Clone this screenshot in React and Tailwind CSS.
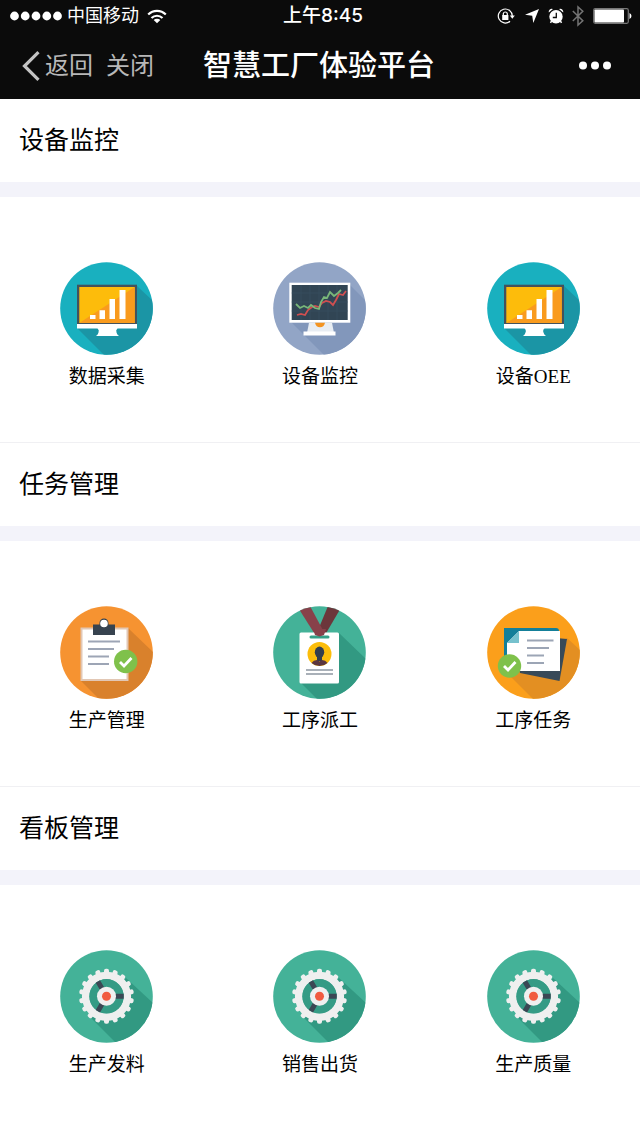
const TEETH = Array.from({ length: 18 }, (_, i) => i * 20)

function Round({ id, color, shade, shadow, children }) {
  return (
    <svg viewBox="0 0 93 93" className="h-[93px] w-[93px]" aria-hidden="true">
      <clipPath id={id}>
        <circle cx="46.5" cy="46.5" r="46.3" />
      </clipPath>
      <g clipPath={`url(#${id})`}>
        <rect width="93" height="93" fill={color} />
        <path d={shadow} fill={shade} />
        {children}
      </g>
    </svg>
  )
}

function MonitorIcon({ id }) {
  return (
    <Round id={id} color="#19b0bf" shade="#1b95a5" shadow="M17 66 44 93h49V39L76 23z">
      <rect x="17" y="22.7" width="60" height="40" fill="#43525c" />
      <path d="M19.3 25h55.4v36H19.3z" fill="#fdbc0b" />
      <path d="M19.3 61 74.7 25v36z" fill="#f99b1e" />
      <path d="M30 53h5.5v4H30zM39.5 48.3H45V57h-5.5zM49.5 37H55v20h-5.5zM59.5 28h6v29h-6z" fill="#fff" />
      <path d="M17 62h60v4.5H57.500q-2 1.500-1 4 .5 2 2.500 3.500H36q2-1.500 2.500-3.500 1-2.500-1-4H17z" fill="#fff" />
    </Round>
  )
}

function ChartIcon({ id }) {
  return (
    <Round id={id} color="#92a5c6" shade="#8297bb" shadow="M17 59 51 93h42V39L76 22z">
      <rect x="16.3" y="20.7" width="61" height="40" fill="#fff" />
      <rect x="18.7" y="23" width="56" height="35" fill="#314554" />
      <path d="M18.7 31h56M18.7 40h56M18.7 49h56M28 23v35M37 23v35M46 23v35M55 23v35M64 23v35" stroke="#3b5363" strokeWidth=".6" />
      <path d="m24 53 4-1 4 1 3-5 4-3 3-1 4 1 3-4 4-2 4 1 3 3 3-5 3-6 4 1 3-4" fill="none" stroke="#cf4f50" strokeWidth="1.8" />
      <path d="m23 42 4 4 4-2 4 2 3-3 4 3 4 1 2-7 3-5 3 1 3-6 4 4 4-3 3-3" fill="none" stroke="#79b779" strokeWidth="1.8" />
      <path d="M36 60.7h23L61 71H34z" fill="#e8edf3" />
      <path d="M42 60.7h10q-1 4.500-5 4.500t-5-4.500z" fill="#f39422" />
      <rect x="30.5" y="69.5" width="32" height="4" fill="#fff" />
    </Round>
  )
}

function ClipboardIcon({ id }) {
  return (
    <Round id={id} color="#f69331" shade="#d9812c" shadow="M21 75 39 93h54V46L68 22z">
      <rect x="21.5" y="22.5" width="46" height="51.5" fill="#fff" stroke="#e2c7b4" strokeWidth="2" />
      <path d="M33 18.5h6.500V17a4.500 4.500 0 0 1 9 0v1.500H55V29H33z" fill="#37434f" />
      <circle cx="44" cy="17.5" r="3.8" fill="#fff" />
      <path d="M28 35.5h32M28 43h26M28 50.5h21M28 58h21" stroke="#9da5b5" strokeWidth="2" />
      <circle cx="65.7" cy="55.5" r="11.7" fill="#7fc14b" />
      <path d="m60 56 4 4 7.500-8" fill="none" stroke="#fff" strokeWidth="2.8" />
    </Round>
  )
}

function BadgeIcon({ id }) {
  return (
    <Round id={id} color="#44b298" shade="#329982" shadow="M27 76 44 93h49V53L66 27z">
      <path d="M55 0h14L52 29h-9z" fill="#6c363b" />
      <path d="M24 0h13l15 28-9 2z" fill="#88414a" />
      <rect x="26.5" y="26.5" width="39.5" height="51" rx="1.5" fill="#fff" />
      <rect x="36.500" y="29.5" width="20" height="3" rx="1.5" fill="#35a087" />
      <path d="M40 23h13l-2 6-4.500 1.500L42 29z" fill="#88414a" />
      <circle cx="46.5" cy="48" r="12" fill="#fcbd0a" />
      <ellipse cx="46.5" cy="46.3" rx="4.7" ry="5.7" fill="#333e4d" />
      <path d="M44 50h5v5h-5z" fill="#333e4d" />
      <path d="M38.5 56.9q2-2.7 5.500-2.900l2.500 1.500 2.500-1.500q3.500.2 5.500 2.900a12 12 0 0 1-16 0z" fill="#5b3640" />
      <path d="M33 64h27M33 68h27" stroke="#a9b0b8" strokeWidth="2" />
    </Round>
  )
}

function PapersIcon({ id }) {
  return (
    <Round id={id} color="#fb9f1b" shade="#e38f22" shadow="M20 67 46 93h47V44L80 32z">
      <path d="m24 28 56 5-7.500 42L33 67z" fill="#384a58" />
      <path d="M17 22h52q3 0 3 3v35H17z" fill="#147f99" />
      <path d="M32 25h41v40H20V37z" fill="#fff" />
      <path d="M32 25v12H20z" fill="#76c1cd" />
      <path d="M40 34.5h26.500M40 42h22M40 49.5h17M40 57h17" stroke="#9ca5b5" strokeWidth="2" />
      <circle cx="22.5" cy="60" r="11.7" fill="#7fc14b" />
      <path d="m17 60 4 4 7.500-8" fill="none" stroke="#fff" strokeWidth="2.8" />
    </Round>
  )
}

function GearIcon({ id }) {
  return (
    <Round id={id} color="#44b298" shade="#329982" shadow="M29 66 56 93h37V53L66 28z">
      {TEETH.map(a => (
        <rect key={a} x="44" y="18.8" width="5" height="7" rx="2" fill="#efefef" transform={`rotate(${a} 46.5 46.3)`} />
      ))}
      <circle cx="46.5" cy="46.3" r="20.8" fill="none" stroke="#efefef" strokeWidth="7.6" />
      <circle cx="46.5" cy="46.3" r="17.2" fill="#359b85" />
      <path d="M46.5 46.3h17.200M46.5 46.3l-8.600-14.900M46.5 46.3l-8.600 14.900" stroke="#3b4754" strokeWidth="5" />
      <circle cx="46.5" cy="46.3" r="9.5" fill="#efefef" />
      <circle cx="46.5" cy="46.3" r="4.5" fill="#f15b40" />
    </Round>
  )
}

const sections = [
  {
    title: '设备监控',
    items: [
      { label: '数据采集', Icon: MonitorIcon },
      { label: '设备监控', Icon: ChartIcon },
      { label: '设备OEE', Icon: MonitorIcon },
    ],
  },
  {
    title: '任务管理',
    items: [
      { label: '生产管理', Icon: ClipboardIcon },
      { label: '工序派工', Icon: BadgeIcon },
      { label: '工序任务', Icon: PapersIcon },
    ],
  },
  {
    title: '看板管理',
    items: [
      { label: '生产发料', Icon: GearIcon },
      { label: '销售出货', Icon: GearIcon },
      { label: '生产质量', Icon: GearIcon },
    ],
  },
]

function StatusBar() {
  return (
    <div className="grid h-8 grid-cols-[1fr_auto_1fr] items-center pr-2 pl-[10px] text-[18px] leading-8">
      <div className="flex items-center">
        <svg className="mr-[5px] h-[10px] w-[52px]" viewBox="0 0 52 10" fill="#fff">
          <circle cx="4.5" cy="5" r="4.4" />
          <circle cx="15.2" cy="5" r="4.4" />
          <circle cx="26" cy="5" r="4.4" />
          <circle cx="36.8" cy="5" r="4.4" />
          <circle cx="47.5" cy="5" r="4.4" />
        </svg>
        <span>中国移动</span>
        <svg className="ml-2 h-[15px] w-5" viewBox="0 0 20 15" fill="none" stroke="#fff" strokeWidth="2.2">
          <path d="M1.2 5.5a12.400 12.400 0 0 1 17.600 0M4.5 9a7.800 7.800 0 0 1 11 0" />
          <path d="M10 14.3 6.7 11a4.700 4.700 0 0 1 6.600 0z" fill="#fff" stroke="none" />
        </svg>
      </div>
      <span className="pl-1 text-[19px] font-medium">上午8:45</span>
      <div className="flex items-center justify-end">
        <svg className="h-4 w-[18px]" viewBox="0 0 18 16" fill="none" stroke="#fff" strokeWidth="1.2">
          <path d="M15.3 8A7 7 0 1 0 13 13.200" />
          <path d="M12.8 7.5h5l-2.500 3.300z" fill="#fff" stroke="none" />
          <path d="M6.3 7.5V6a2 2 0 0 1 4 0v1.500" />
          <path d="M5.2 7h6.200v5H5.200z" fill="#fff" stroke="none" />
        </svg>
        <svg className="ml-[10px] h-[14px] w-[14px]" viewBox="0 0 14 14" fill="#fff">
          <path d="M14 0 8.3 14 7.2 6.8 0 5.7z" />
        </svg>
        <svg className="ml-[9px] h-4 w-4" viewBox="0 0 16 16" fill="#fff">
          <circle cx="8" cy="8.8" r="6.7" />
          <path d="M.8 4.5A3 3 0 0 1 5 1zM15.2 4.5A3 3 0 0 0 11 1z" />
          <path d="m3.500 13-1 1.800M12.500 13l1 1.800" stroke="#fff" strokeWidth="1.5" />
          <path d="M8.3 4.8v4.700H4.800" fill="none" stroke="#0b0b0b" strokeWidth="1.3" />
        </svg>
        <svg className="ml-2 h-[22px] w-3" viewBox="0 0 12 22" fill="none" stroke="#747474" strokeWidth="1.5">
          <path d="m.8 6 10 9.800L6 20V2l4.800 4.200L.8 16" />
        </svg>
        <svg className="ml-[9px] h-4 w-[39px]" viewBox="0 0 39 16">
          <rect x=".7" y=".7" width="34.6" height="14.6" rx="1.5" fill="none" stroke="#777" strokeWidth="1.2" />
          <rect x="1.5" y="1.5" width="29.5" height="13" rx=".8" fill="#fff" />
          <path d="M36.5 5q2 1 2 3t-2 3z" fill="#fff" />
        </svg>
      </div>
    </div>
  )
}

function NavBar() {
  return (
    <div className="grid h-[67px] grid-cols-[1fr_auto_1fr] items-center pr-7 pl-[22px]">
      <div className="flex items-center gap-[13px] text-[24px] leading-8 text-[#b8b8b8]">
        <button className="flex items-center gap-[5px]">
          <svg className="h-[30px] w-[18px]" viewBox="0 0 18 30" fill="none" stroke="#c4c4c4" strokeWidth="3.2">
            <path d="M16.5 1.2 2.5 15l14 13.800" />
          </svg>
          返回
        </button>
        <button>关闭</button>
      </div>
      <h1 className="pl-1 text-[29px] leading-10 font-medium">智慧工厂体验平台</h1>
      <button className="justify-self-end" aria-label="更多">
        <svg className="h-[9px] w-[34px]" viewBox="0 0 34 9" fill="#fff">
          <circle cx="5" cy="4.5" r="4" />
          <circle cx="17" cy="4.5" r="4" />
          <circle cx="29" cy="4.5" r="4" />
        </svg>
      </button>
    </div>
  )
}

export default function App() {
  return (
    <div className="min-h-screen overflow-hidden bg-white font-['Inter','Noto_Sans_CJK_SC',sans-serif]">
      <header className="bg-[#0b0b0b] text-white">
        <StatusBar />
        <NavBar />
      </header>
      <main className="text-black">
        {sections.map((section, s) => (
          <section key={section.title} className="border-b border-[#f0f0f3] last:border-b-0">
            <h2 className="border-b-[15px] border-[#f3f3fa] px-[19px] py-[21px] text-[25px] leading-[41px]">{section.title}</h2>
            <div className="grid grid-cols-3 pt-[65px] pb-[51px]">
              {section.items.map(({ label, Icon }, i) => (
                <a key={label} href="#" className="flex flex-col items-center gap-2">
                  <Icon id={`icon-${s}-${i}`} />
                  <span className="font-['Liberation_Serif','Noto_Sans_CJK_SC',serif] text-[19px] leading-7">{label}</span>
                </a>
              ))}
            </div>
          </section>
        ))}
      </main>
    </div>
  )
}
